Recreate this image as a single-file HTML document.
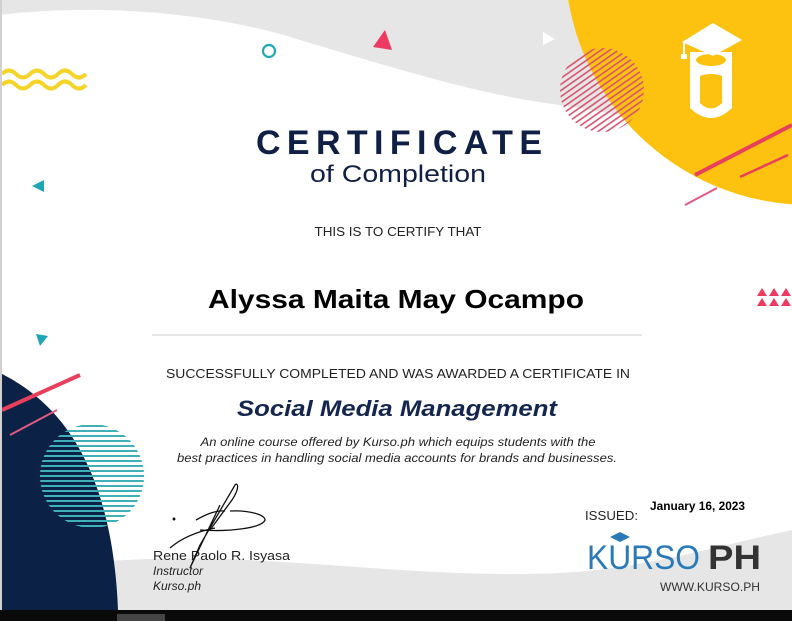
<!DOCTYPE html>
<html><head><meta charset="utf-8"><style>
html,body{margin:0;padding:0;background:#fff;width:792px;height:621px;overflow:hidden}
svg{display:block}
</style></head><body>
<svg width="792" height="621" viewBox="0 0 792 621" xmlns="http://www.w3.org/2000/svg">
<defs>
<pattern id="hs" width="6" height="5" patternUnits="userSpaceOnUse"><rect width="6" height="2" fill="#3fb0b8"/></pattern>
<pattern id="ds" width="5" height="5" patternUnits="userSpaceOnUse" patternTransform="rotate(-35)"><rect width="5" height="1.6" fill="#d9536f"/></pattern>
<clipPath id="cc"><circle cx="92" cy="476" r="52"/></clipPath>
</defs>
<rect width="792" height="621" fill="#fff"/>
<path d="M0,0 H620 V115 L560,105 C480,95 400,70 300,40 C200,8 80,5 0,15 Z" fill="#e6e6e6"/>
<circle cx="810" cy="-40" r="245" fill="#fdc20f"/>
<circle cx="602" cy="90" r="42" fill="url(#ds)"/>
<!-- grad icon -->
<path d="M690,52 L690,108 Q711,128 732,108 L732,52 Z" fill="#fff"/>
<ellipse cx="711" cy="60" rx="15" ry="6" fill="#fdc20f"/>
<path d="M700,76 V103 Q711,114 722,103 V76 Q711,72 700,76 Z" fill="#fdc20f"/>
<polygon points="682,42 713,23 742,40 713,56" fill="#fff"/>
<rect x="683" y="42" width="2" height="14" fill="#fff"/><rect x="681" y="54" width="6" height="5" fill="#fff"/>
<line x1="695" y1="175" x2="792" y2="125" stroke="#e8405c" stroke-width="4"/>
<line x1="740" y1="177" x2="788" y2="155" stroke="#e8405c" stroke-width="2.5"/>
<line x1="685" y1="205" x2="717" y2="188" stroke="#e05a82" stroke-width="2"/>
<path d="M2,74 q7,-7 14,0 t14,0 t14,0 t14,0 t14,0 t14,0" fill="none" stroke="#f5d327" stroke-width="4"/>
<path d="M2,85 q7,-7 14,0 t14,0 t14,0 t14,0 t14,0 t14,0" fill="none" stroke="#f5d327" stroke-width="4"/>
<circle cx="269" cy="51" r="6" fill="none" stroke="#20a8b4" stroke-width="2.2"/>
<polygon points="373,47 385,30 392,50" fill="#ec3a62"/>
<polygon points="543,32 555,39 543,45" fill="#fff"/>
<polygon points="32,186 44,180 44,192" fill="#1fa5b3"/>
<polygon points="36,334 48,336 40,346" fill="#1fa5b3"/>
<g fill="#ec3a62">
<polygon points="757,296 762,288 767,296"/><polygon points="769,296 774,288 779,296"/><polygon points="781,296 786,288 791,296"/>
<polygon points="757,306 762,298 767,306"/><polygon points="769,306 774,298 779,306"/><polygon points="781,306 786,298 791,306"/>
</g>
<path d="M100,562 C250,548 400,580 560,573 C650,568 720,545 792,530 V610 H100 Z" fill="#e6e6e6"/>
<path d="M0,373 C55,400 112,460 118,610 L0,610 Z" fill="#0b2145"/>
<g clip-path="url(#cc)"><rect x="38" y="422" width="110" height="110" fill="url(#hs)"/></g>
<line x1="2" y1="410" x2="80" y2="375" stroke="#e8405c" stroke-width="4"/>
<line x1="10" y1="435" x2="57" y2="410" stroke="#e05a82" stroke-width="2"/>
<rect x="0" y="0" width="2" height="610" fill="#d0d0d0"/>
<g font-family="Liberation Sans, sans-serif">
<text x="399" y="154" text-anchor="middle" font-size="34" font-weight="bold" fill="#0f1f45" textLength="286" lengthAdjust="spacing">CERTIFICATE</text>
<text x="398" y="182" text-anchor="middle" font-size="24" fill="#0f1f45" textLength="176" lengthAdjust="spacingAndGlyphs">of Completion</text>
<text x="398" y="236" text-anchor="middle" font-size="13" fill="#222" textLength="167" lengthAdjust="spacingAndGlyphs">THIS IS TO CERTIFY THAT</text>
<text x="396" y="308" text-anchor="middle" font-size="26" font-weight="bold" fill="#000" textLength="376" lengthAdjust="spacingAndGlyphs">Alyssa Maita May Ocampo</text>
<line x1="152" y1="335" x2="642" y2="335" stroke="#ddd" stroke-width="1.5"/>
<text x="398" y="378" text-anchor="middle" font-size="13" fill="#222" textLength="464" lengthAdjust="spacingAndGlyphs">SUCCESSFULLY COMPLETED AND WAS AWARDED A CERTIFICATE IN</text>
<text x="397" y="416" text-anchor="middle" font-size="22" font-weight="bold" font-style="italic" fill="#14264d" textLength="320" lengthAdjust="spacingAndGlyphs">Social Media Management</text>
<text x="398" y="446" text-anchor="middle" font-size="12" font-style="italic" fill="#222" textLength="395" lengthAdjust="spacingAndGlyphs">An online course offered by Kurso.ph which equips students with the</text>
<text x="397" y="462" text-anchor="middle" font-size="12" font-style="italic" fill="#222" textLength="440" lengthAdjust="spacingAndGlyphs">best practices in handling social media accounts for brands and businesses.</text>
<text x="153" y="560" font-size="13" fill="#222" textLength="137" lengthAdjust="spacingAndGlyphs">Rene Paolo R. Isyasa</text>
<text x="153" y="575" font-size="12" font-style="italic" fill="#222">Instructor</text>
<text x="153" y="590" font-size="12" font-style="italic" fill="#222">Kurso.ph</text>
<text x="585" y="520" font-size="13" fill="#222" textLength="53" lengthAdjust="spacingAndGlyphs">ISSUED:</text>
<text x="650" y="510" font-size="12" font-weight="bold" fill="#000" textLength="95" lengthAdjust="spacingAndGlyphs">January 16, 2023</text>
<text x="587" y="569" font-size="34" fill="#2a7ab8" textLength="113" lengthAdjust="spacingAndGlyphs">KURSO</text>
<text x="708" y="569" font-size="34" font-weight="bold" fill="#333" textLength="53" lengthAdjust="spacingAndGlyphs">PH</text>
<text x="660" y="591" font-size="12" fill="#333" textLength="100" lengthAdjust="spacingAndGlyphs">WWW.KURSO.PH</text>
</g>
<polygon points="610,537 620,532 630,537 620,542" fill="#2a7ab8"/>
<g fill="none" stroke="#111" stroke-width="1.3">
<path d="M170,548 C185,535 205,530 215,528 M196,520 C205,515 215,510 225,511 M230,511 C250,510 265,515 265,520 C262,528 230,532 200,530"/>
<path d="M220,505 L190,568 L200,545 L235,485 C238,482 240,488 232,500 L210,530"/>
<circle cx="174" cy="519" r="0.8" fill="#111"/>
</g>
<rect x="0" y="610" width="792" height="11" fill="#0a0a0a"/>
<rect x="117" y="614" width="48" height="7" fill="#444"/>
</svg>
</body></html>
